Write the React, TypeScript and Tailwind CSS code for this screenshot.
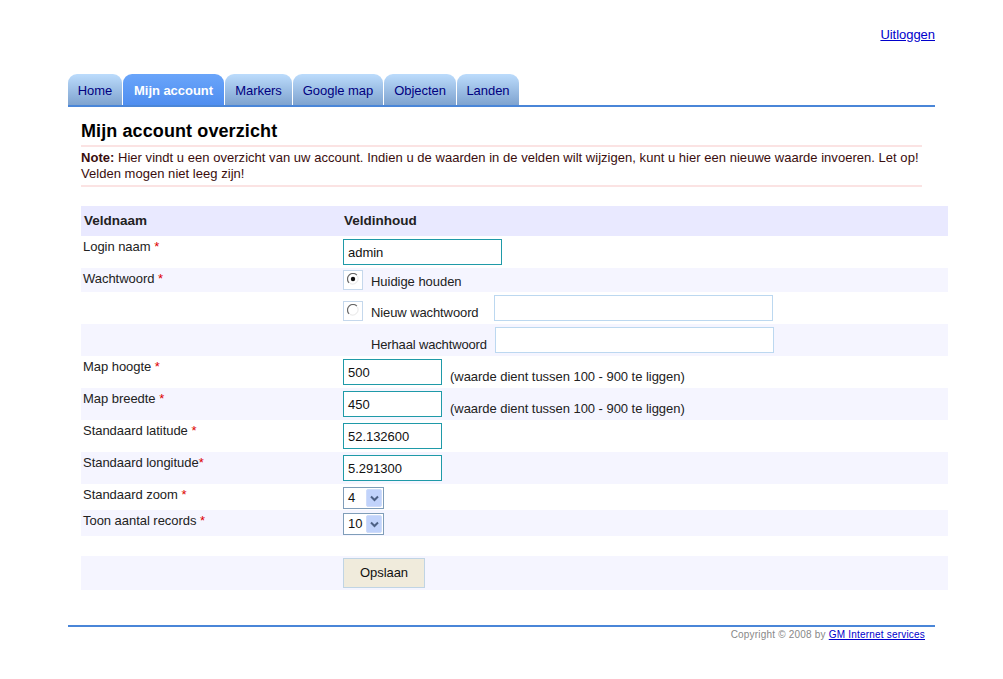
import React from "react";

const tabs = ["Home", "Mijn account", "Markers", "Google map", "Objecten", "Landen"];
const widths: Record<string, string> = {
  Home: "w-[54px]",
  "Mijn account": "w-[101px]",
  Markers: "w-[67px]",
  "Google map": "w-[90px]",
  Objecten: "w-[72px]",
  Landen: "w-[62px]",
};

function Row({ label, star, tint, h, children }: { label?: string; star?: string; tint?: boolean; h: string; children?: React.ReactNode }) {
  return (
    <div className={`flex ${h} ${tint ? "bg-[#f5f5ff]" : ""}`}>
      <div className="w-[262px] pl-[2px] pt-[3px] leading-[15px] text-[#222]">
        {label}
        {star && <span className="text-[#d00]">{star}</span>}
      </div>
      <div className="flex-1 min-w-0">{children}</div>
    </div>
  );
}

function TextBox({ value, w }: { value: string; w: string }) {
  return (
    <div className={`${w} h-[26px] border border-[#1f9aa8] bg-white pl-[4px] leading-[25px] text-[#111]`}>{value}</div>
  );
}

function PassBox({ w }: { w: string }) {
  return <div className={`${w} h-[26px] border border-[#bcd8f0] bg-white`} />;
}

function Radio({ on }: { on?: boolean }) {
  return (
    <div className="w-[20px] h-[20px] border border-[#c5d8ec] bg-white flex items-start pl-[3px] pt-[2px]">
      <svg width="12" height="12" viewBox="0 0 12 12">
        <path d="M2.1 9.9A5.5 5.5 0 0 1 9.9 2.1" fill="none" stroke="#666" strokeWidth="1.2" />
        <path d="M10.4 3A5.5 5.5 0 0 1 3 10.4" fill="none" stroke="#ececec" strokeWidth="1.2" />
        {on && <circle cx="6" cy="6" r="2.2" fill="#111" />}
      </svg>
    </div>
  );
}

function Select({ value }: { value: string }) {
  return (
    <div className="w-[41px] h-[22px] border border-[#7f9db9] bg-white flex items-center justify-between pr-[1px] pl-[4px] text-[#111]">
      <span>{value}</span>
      <div className="w-[16px] h-[18px] bg-[#c1d3fb] border border-[#cfdcfa] rounded-[2px] flex items-center justify-center">
        <svg width="9" height="7" viewBox="0 0 9 7">
          <path d="M1 1.5 L4.5 5 L8 1.5" fill="none" stroke="#4d6185" strokeWidth="2" />
        </svg>
      </div>
    </div>
  );
}

const Hint = () => (
  <span className="ml-[8px] mt-[10px] leading-[15px] text-[#222]">(waarde dient tussen 100 - 900 te liggen)</span>
);

export default function App() {
  return (
    <div className="w-[1003px] h-[679px] overflow-hidden bg-white font-['Liberation_Sans',Arial,sans-serif] text-[13px] tracking-[-0.04px]">
      <div className="ml-[68px] w-[867px]">
        <div className="h-[74px] pt-[27px] text-right leading-[15px]">
          <a href="#" className="text-[#0000cc] underline">Uitloggen</a>
        </div>

        <div className="flex h-[33px] gap-[1px] border-b-2 border-[#4a86d8]">
          {tabs.map((t) => (
            <div
              key={t}
              className={`${widths[t]} h-[31px] rounded-t-[9px] text-center leading-[33px] ${
                t === "Mijn account"
                  ? "bg-gradient-to-b from-[#6aa5fa] to-[#4f8ef0] text-white font-bold"
                  : "bg-gradient-to-b from-[#bcdcfc] to-[#7fa3cf] text-[#000080]"
              }`}
            >
              {t}
            </div>
          ))}
        </div>

        <div className="ml-[13px] w-[841px]">
          <h1 className="mt-[13px] text-[18px] leading-[22px] font-bold tracking-[0.1px] text-black">Mijn account overzicht</h1>
          <div className="mt-[3px] border-y-2 border-[#fbe3e3] pt-[3px] pb-[3px] leading-[16px] tracking-[0.03px] text-[#3a0d0d]">
            <b>Note:</b> Hier vindt u een overzicht van uw account. Indien u de waarden in de velden wilt wijzigen, kunt u hier een nieuwe waarde invoeren. Let op!
            <br />
            Velden mogen niet leeg zijn!
          </div>
        </div>

        <div className="ml-[13px] mt-[19px] w-[867px]">
          <div className="flex h-[30px] bg-[#e9e9ff] items-center pt-[1px] font-bold text-[#222] text-[13.5px] tracking-normal">
            <div className="w-[263px] pl-[3px]">Veldnaam</div>
            <div>Veldinhoud</div>
          </div>

          <Row label="Login naam " star="*" h="h-[32px]">
            <div className="pt-[3px]"><TextBox value="admin" w="w-[159px]" /></div>
          </Row>

          <Row label="Wachtwoord " star="*" tint h="h-[24px]">
            <div className="flex items-start pt-[2px]">
              <Radio on />
              <span className="ml-[8px] mt-[4px] leading-[15px] text-[#222]">Huidige houden</span>
            </div>
          </Row>

          <Row h="h-[32px]">
            <div className="flex items-start">
              <div className="mt-[9px]"><Radio /></div>
              <span className="ml-[8px] mt-[13px] w-[123px] leading-[15px] tracking-[-0.1px] text-[#222]">Nieuw wachtwoord</span>
              <div className="mt-[3px]"><PassBox w="w-[279px]" /></div>
            </div>
          </Row>

          <Row tint h="h-[32px]">
            <div className="flex items-start pl-[28px]">
              <span className="mt-[13px] w-[124px] leading-[15px] tracking-[-0.15px] text-[#222]">Herhaal wachtwoord</span>
              <div className="mt-[3px]"><PassBox w="w-[279px]" /></div>
            </div>
          </Row>

          <Row label="Map hoogte " star="*" h="h-[32px]">
            <div className="flex items-start pt-[3px]">
              <TextBox value="500" w="w-[99px]" />
              <Hint />
            </div>
          </Row>

          <Row label="Map breedte " star="*" tint h="h-[32px]">
            <div className="flex items-start pt-[3px]">
              <TextBox value="450" w="w-[99px]" />
              <Hint />
            </div>
          </Row>

          <Row label="Standaard latitude " star="*" h="h-[32px]">
            <div className="pt-[3px]"><TextBox value="52.132600" w="w-[99px]" /></div>
          </Row>

          <Row label="Standaard longitude" star="*" tint h="h-[32px]">
            <div className="pt-[3px]"><TextBox value="5.291300" w="w-[99px]" /></div>
          </Row>

          <Row label="Standaard zoom " star="*" h="h-[26px]">
            <div className="pt-[3px]"><Select value="4" /></div>
          </Row>

          <Row label="Toon aantal records " star="*" tint h="h-[26px]">
            <div className="pt-[3px]"><Select value="10" /></div>
          </Row>

          <div className="h-[20px]" />

          <Row tint h="h-[34px]">
            <div className="pt-[2px]">
              <button className="w-[82px] h-[30px] bg-[#f0ebdc] border border-[#c0d4e4] text-[#111]">Opslaan</button>
            </div>
          </Row>
        </div>

        <div className="mt-[35px] border-t-2 border-[#4a86d8] pr-[10px] pt-[1px] text-right text-[10px] leading-[13px] tracking-[0.2px] text-[#888]">
          Copyright © 2008 by <a href="#" className="text-[#0000cc] underline">GM Internet services</a>
        </div>
      </div>
    </div>
  );
}
